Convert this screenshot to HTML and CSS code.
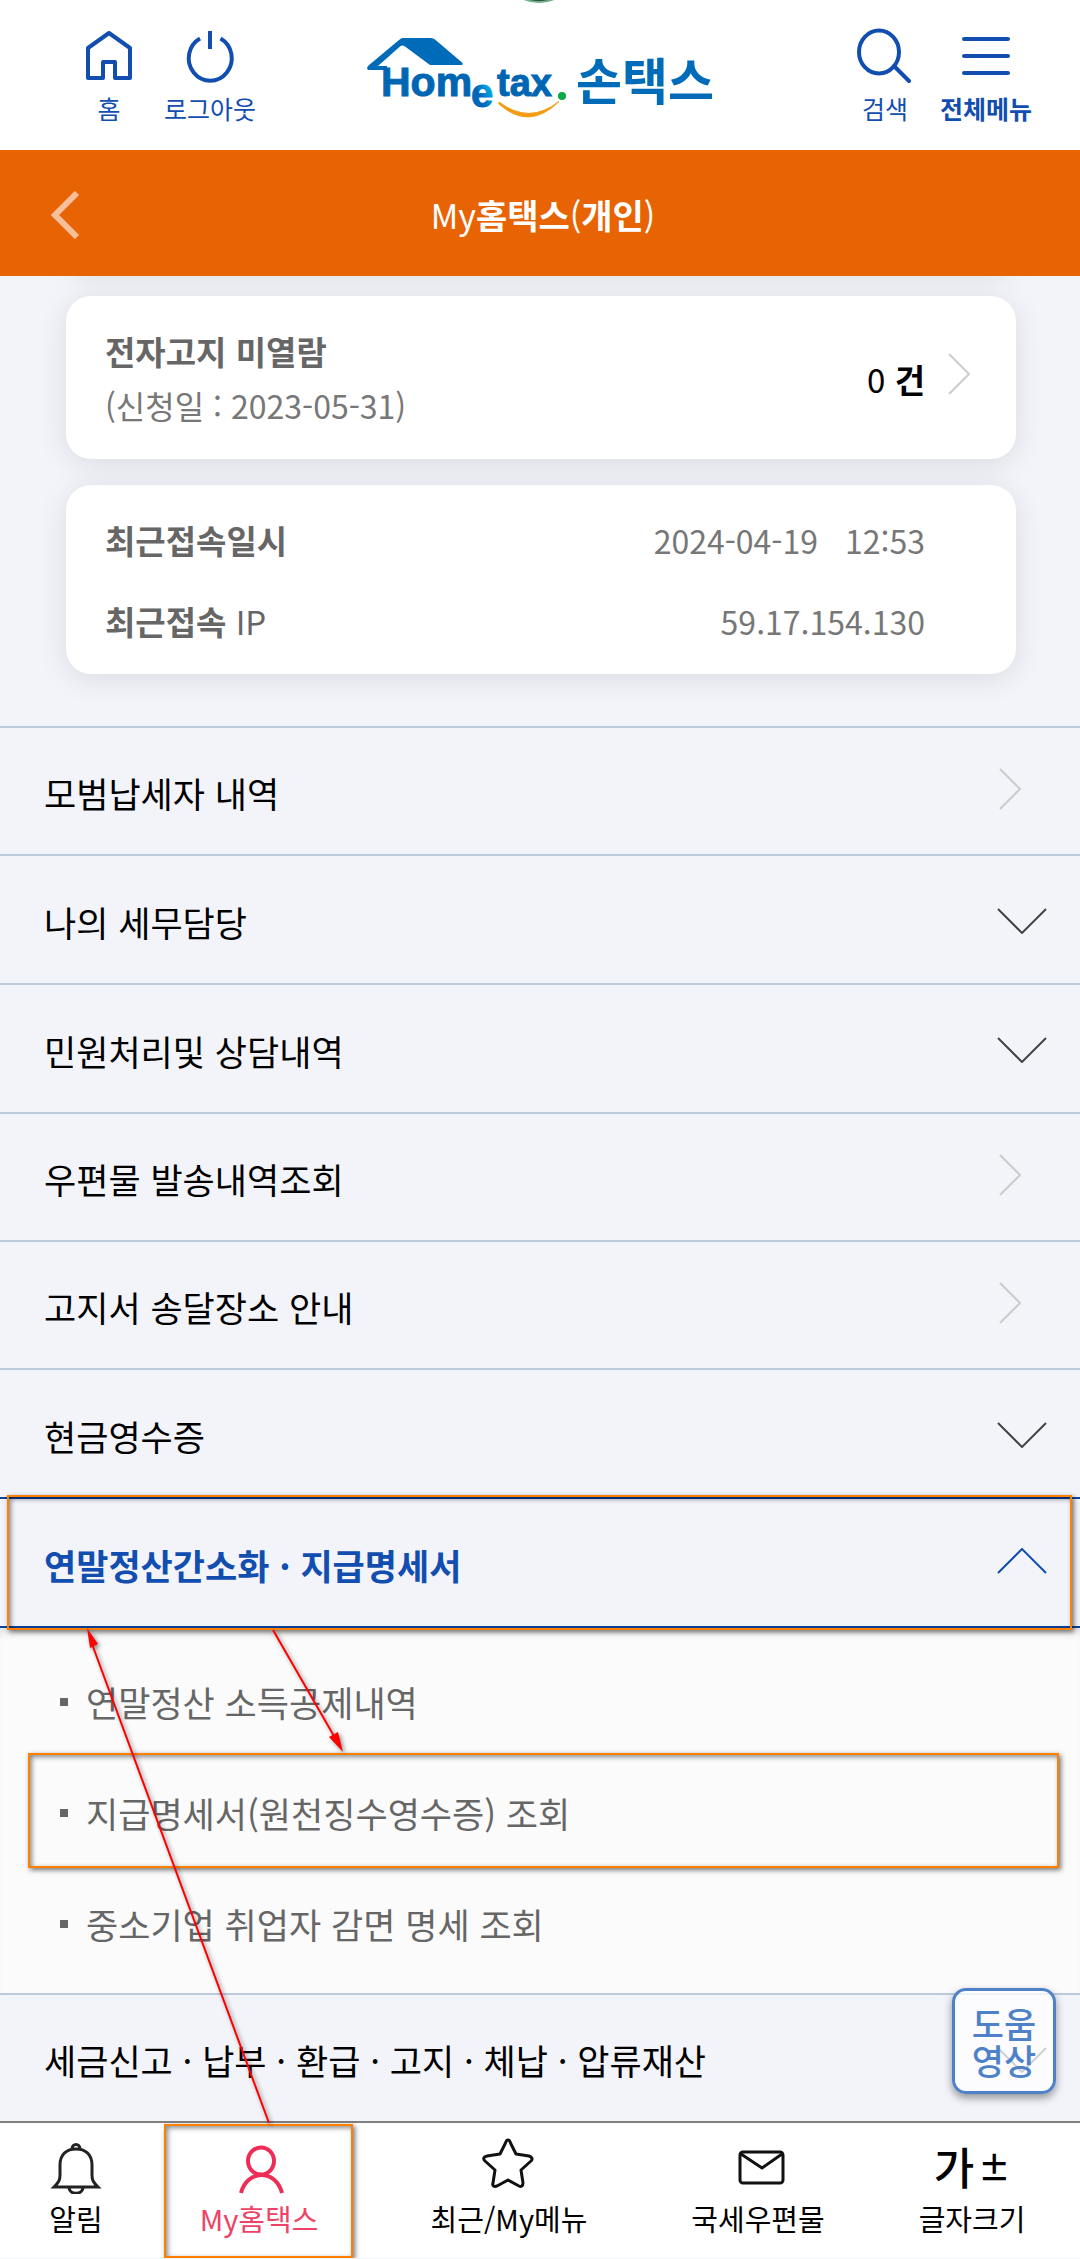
FILE: index.html
```html
<!DOCTYPE html>
<html lang="ko">
<head>
<meta charset="utf-8">
<meta name="viewport" content="width=device-width, initial-scale=1">
<title>My홈택스(개인)</title>
<link rel="stylesheet" href="styles.css">
</head>
<body>
<div class="app">
  <header class="topbar">
    <span class="camera" aria-hidden="true"></span>
    <div class="tools tools-start">
      <a class="tool" href="#home">
        <svg width="56" height="56" viewBox="0 0 56 56" fill="none" stroke="#114eb0" stroke-width="4" stroke-linejoin="round"><path d="M7 21 28 6 49 21V51H34V35H22V51H7Z"/></svg>
        <span>홈</span>
      </a>
      <button class="tool tool-wide" type="button">
        <svg width="56" height="56" viewBox="0 0 56 56" fill="none" stroke="#114eb0" stroke-width="4"><path d="M18 11.500A21.500 22.500 0 1 0 38.500 11.500M28 4V22"/></svg>
        <span>로그아웃</span>
      </button>
    </div>
    <a class="logo" href="#main">
      <svg width="206" height="90" viewBox="0 0 206 90" role="img" aria-label="Hometax">
        <defs><linearGradient id="e" x1="0" x2="1" y1="1" y2="0"><stop offset=".4" stop-color="#0066b8"/><stop offset=".8" stop-color="#00b4f0"/></linearGradient></defs>
        <path d="M2 37Q0 35 2.500 32.500L33 7Q35 5 37 5H65Q67 5 69 6.500L96 29.500Q98 32 95 32H64L39 13.500Q36.500 11.500 34 13.500L12 33H21V37Z" fill="#006bb9"/>
        <g class="logo-word" fill="#0066b3" stroke="#0066b3"><text x="15" y="63" font-size="41">Hom</text><text x="105" y="74" font-size="40" fill="url(#e)" stroke="url(#e)">e</text><text x="131" y="63" font-size="38">tax</text></g>
        <circle cx="196" cy="63" r="4" fill="#0aab45"/>
        <path d="M133 69Q163 92 193 68.500Q163 98 133 71Z" fill="#f39c12" stroke="#f39c12"/>
      </svg>
      <span class="logo-name">손택스</span>
    </a>
    <div class="tools tools-end">
      <button class="tool" type="button">
        <svg width="56" height="56" viewBox="0 0 56 56" fill="none" stroke="#114eb0" stroke-width="4" stroke-linecap="round"><ellipse cx="22" cy="25" rx="20" ry="21.500"/><path d="M37 39 52 54"/></svg>
        <span>검색</span>
      </button>
      <button class="tool tool-wide" type="button">
        <svg width="56" height="56" viewBox="0 0 56 56" fill="none" stroke="#114eb0" stroke-width="4" stroke-linecap="round"><path d="M6 12H50M6 29H50M6 46H50"/></svg>
        <strong>전체메뉴</strong>
      </button>
    </div>
  </header>

  <div class="titlebar">
    <button class="back" type="button" aria-label="뒤로"><svg width="30" height="48" viewBox="0 0 30 48" fill="none" stroke="#f8bf9b" stroke-width="6"><path d="M27 2 5 24 27 46"/></svg></button>
    <h1>My<b>홈택스</b>(<b>개인</b>)</h1>
  </div>

  <main>
    <section class="cards">
      <a class="card notice" href="#notice">
        <span class="notice-text"><b>전자고지 미열람</b><span class="value">(신청일 : 2023-05-31)</span></span>
        <span class="count">0 <b>건</b></span>
        <svg class="go" width="24" height="42" viewBox="0 0 24 42"><path d="M1 1 21 21 1 41"/></svg>
      </a>
      <dl class="card access">
        <div><dt>최근접속일시</dt><dd class="value">2024-04-19<time>12:53</time></dd></div>
        <div><dt>최근접속 <span>IP</span></dt><dd class="value">59.17.154.130</dd></div>
      </dl>
    </section>

    <ul class="menu">
      <li><a class="row" href="#m1">모범납세자 내역<svg class="go" width="24" height="42" viewBox="0 0 24 42"><path d="M1 1 21 21 1 41"/></svg></a></li>
      <li><button class="row toggle" type="button">나의 세무담당<svg class="fold" width="50" height="26" viewBox="0 0 50 26"><path d="M1 1 25 25 49 1"/></svg></button></li>
      <li><button class="row toggle" type="button">민원처리및 상담내역<svg class="fold" width="50" height="26" viewBox="0 0 50 26"><path d="M1 1 25 25 49 1"/></svg></button></li>
      <li><a class="row" href="#m4">우편물 발송내역조회<svg class="go" width="24" height="42" viewBox="0 0 24 42"><path d="M1 1 21 21 1 41"/></svg></a></li>
      <li><a class="row" href="#m5">고지서 송달장소 안내<svg class="go" width="24" height="42" viewBox="0 0 24 42"><path d="M1 1 21 21 1 41"/></svg></a></li>
      <li><button class="row toggle" type="button">현금영수증<svg class="fold" width="50" height="26" viewBox="0 0 50 26"><path d="M1 1 25 25 49 1"/></svg></button></li>
      <li class="open">
        <button class="row toggle marked" type="button" aria-expanded="true">연말정산간소화 · 지급명세서<svg class="fold" width="50" height="26" viewBox="0 0 50 26"><path d="M1 25 25 1 49 25"/></svg></button>
        <ul class="submenu">
          <li><a href="#s1">연말정산 소득공제내역</a></li>
          <li><a class="marked" href="#s2">지급명세서(원천징수영수증) 조회</a></li>
          <li><a href="#s3">중소기업 취업자 감면 명세 조회</a></li>
        </ul>
        <svg class="arrows" width="360" height="630" viewBox="0 0 360 630" aria-hidden="true">
          <g stroke="#f00" stroke-width="2"><path d="M273 131 338 244M269 624 92 145"/></g>
          <g fill="#f00"><path d="M343 253 329 238 338 233ZM87 129 98 145 90 149Z"/></g>
        </svg>
      </li>
      <li class="last">
        <button class="row" type="button">세금신고 · 납부 · 환급 · 고지 · 체납 · 압류재산<svg class="fold" width="50" height="26" viewBox="0 0 50 26"><path d="M1 1 25 25 49 1"/></svg></button>
        <button class="help" type="button"><span>도움</span><span>영상</span></button>
      </li>
    </ul>
  </main>

  <nav class="tabs">
    <a class="tab" href="#alarm">
      <svg width="56" height="56" viewBox="0 0 56 56" fill="none" stroke="#222" stroke-width="3"><path d="M6 49C11 44 12 42 12 37V27C12 16 19 11 28 11S44 16 44 27V37C44 42 45 44 50 49ZM24 11C24 5 32 5 32 11M21 50C22 57 34 57 35 50"/></svg>
      <span>알림</span>
    </a>
    <a class="tab current marked" href="#my">
      <svg width="56" height="56" viewBox="0 0 56 56" fill="none" stroke="#ee2d56" stroke-width="4"><ellipse cx="30" cy="23" rx="13" ry="13.500"/><path d="M10 55C16 31 45 31 51 55"/></svg>
      <span>My홈택스</span>
    </a>
    <a class="tab" href="#recent">
      <svg width="56" height="56" viewBox="0 0 56 56" fill="none" stroke="#111" stroke-width="3" stroke-linejoin="round"><path d="M27 2C29 2 29 4 30 6L35 16L48 18C51 19 52 21 50 23L40 32L42 45C42 48 40 49 38 48L27 42L16 48C13 49 11 48 12 45L14 32L4 23C2 21 2 19 6 18L19 16L24 6C25 4 25 2 27 2Z"/></svg>
      <span>최근/My메뉴</span>
    </a>
    <a class="tab" href="#mail">
      <svg width="56" height="56" viewBox="0 0 56 56" fill="none" stroke="#111" stroke-width="3"><rect x="10" y="14" width="43" height="31" rx="3"/><path d="M11 16 32 30 52 16"/></svg>
      <span>국세우편물</span>
    </a>
    <button class="tab" type="button">
      <span class="glyph"><span>가</span><span class="pm">±</span></span>
      <span>글자크기</span>
    </button>
  </nav>
</div>
</body>
</html>
```
FILE: styles.css
```css
* { box-sizing: border-box; }
body {
  margin: 0;
  background: #f3f4fa;
  color: #000;
  font-family: "Noto Sans CJK KR", "Noto Sans", sans-serif;
}
a { color: inherit; text-decoration: none; }
button { margin: 0; padding: 0; border: 0; background: none; color: inherit; font: inherit; cursor: pointer; }
ul, dl, dd, h1 { margin: 0; padding: 0; list-style: none; }
svg { display: block; flex: none; }

.app { position: relative; overflow: hidden; }

/* Header */
.topbar {
  position: relative;
  display: grid;
  grid-template-columns: 1fr auto 1fr;
  height: 150px;
  padding: 27px 46px 0;
  background: #fff;
}
.camera {
  position: absolute;
  left: 50%;
  top: -75px;
  width: 78px;
  height: 78px;
  margin-left: -40px;
  border: 2px solid #6fae88;
  border-radius: 50%;
  background: #2f4b3b;
}
.tools { display: flex; gap: 22px; }
.tools-start { padding-left: 32px; }
.tools-end { justify-content: flex-end; }
.tool {
  display: flex;
  flex-direction: column;
  align-items: center;
  width: 62px;
  height: 104px;
  color: #114eb0;
  font-size: 25px;
  line-height: 50px;
  white-space: nowrap;
}
.tool-wide { width: 96px; }
.logo { display: flex; align-items: center; height: 90px; margin-top: 6px; gap: 4px; }
.logo-word { font-family: "Liberation Sans", sans-serif; font-weight: 700; }
.logo-name { color: #006bb9; font-size: 50px; line-height: 90px; font-weight: 700; }

.titlebar {
  display: grid;
  grid-template-columns: 80px 1fr 80px;
  align-items: center;
  height: 126px;
  padding-top: 3px;
  background: #e86304;
  color: #fff;
}
.back { display: flex; justify-content: flex-end; }
h1 { padding-left: 6px; font-size: 34px; line-height: 48px; font-weight: 400; text-align: center; }

/* Summary cards */
.cards { position: relative; display: grid; gap: 26px; padding: 20px 64px 52px 66px; overflow: hidden; }
.cards::before {
  content: "";
  position: absolute;
  inset: -100px 64px auto 66px;
  height: 94px;
  border-radius: 25px;
  box-shadow: 0 5px 30px rgba(0, 0, 0, .1);
}
.card {
  position: relative;
  border-radius: 25px;
  background: #fff;
  color: #666;
  font-size: 33px;
  box-shadow: 0 5px 30px rgba(0, 0, 0, .1);
}
.value { color: #777; font-size: 32px; }
.notice { display: flex; align-items: center; height: 163px; padding: 0 44px 0 39px; }
.notice-text { display: grid; flex: 1; line-height: 54px; }
.count { margin: 2px 23px 0 0; color: #000; }
.go { margin-bottom: 8px; }
.go path { fill: none; stroke: #ccc; stroke-width: 2; }
.access { padding: 15px 91px 12px 39px; }
.access div { display: flex; justify-content: space-between; line-height: 81px; }
.access dt { font-weight: 700; }
.access dt span { font-weight: 400; }
time { margin-left: 27px; }

/* Accordion menu */
.menu { border-top: 2px solid #bccade; }
.row {
  position: relative;
  display: flex;
  align-items: center;
  justify-content: space-between;
  width: 100%;
  height: 128px;
  padding: 3px 57px 0 44px;
  border-bottom: 2px solid #bccade;
  font-size: 35px;
  text-align: left;
}
.toggle { height: 129px; padding-right: 33px; }
.fold path { fill: none; stroke: #444; stroke-width: 2; }
.open { position: relative; }
.open .row { border-bottom-color: #0b439d; color: #114eb0; font-weight: 700; box-shadow: 0 -2px #0b439d; }
.open .fold { margin-bottom: 6px; }
.open .fold path { stroke: #114eb0; }
.submenu {
  padding: 18px 21px 14px 28px;
  border-bottom: 2px solid #bccade;
  background: #fbfbfb;
  box-shadow: inset 0 10px 12px -8px rgba(0, 0, 0, .15);
}
.submenu a {
  position: relative;
  display: flex;
  align-items: center;
  gap: 18px;
  height: 111px;
  padding-left: 32px;
  color: #666;
  font-size: 35px;
}
.submenu a::before { content: ""; width: 8px; height: 8px; background: #666; }
.marked { position: relative; }
.marked::after {
  content: "";
  position: absolute;
  inset: -4px 0 0;
  border: 2px solid #ff8000;
  box-shadow: 2px 2px 5px rgba(0, 0, 0, .55), inset 2px 2px 5px rgba(0, 0, 0, .45);
}
.row.marked::after { inset: -4px 8px -4px 7px; }
.arrows { position: absolute; left: 0; top: 0; z-index: 1; pointer-events: none; filter: drop-shadow(2px 2px 2px rgba(0, 0, 0, .45)); }
.last { position: relative; }
.last .row { padding-right: 33px; border-bottom-color: #808080; }
.help {
  position: absolute;
  right: 24px;
  top: -7px;
  display: flex;
  flex-direction: column;
  align-items: center;
  justify-content: center;
  width: 104px;
  height: 106px;
  border: 3px solid #4f81c9;
  border-radius: 14px;
  background: rgba(255, 255, 255, .75);
  color: #4f81c9;
  font-size: 35px;
  line-height: 37px;
  font-weight: 500;
  box-shadow: 0 4px 8px rgba(0, 0, 0, .4);
}

/* Bottom tabs */
.tabs { display: grid; grid-template-columns: 152fr 214fr 286fr 212fr 216fr; background: #fff; }
.tab {
  display: flex;
  flex-direction: column;
  align-items: center;
  height: 135px;
  padding-top: 15px;
  font-size: 29px;
  line-height: 48px;
  white-space: nowrap;
}
.tab svg, .glyph { height: 56px; }
.current { color: #ee4266; }
.tab.marked::after { inset: 1px 13px 0 12px; }
.glyph { display: flex; align-items: center; gap: 4px; font-size: 44px; font-weight: 500; }
.pm { font-size: 32px; font-weight: 700; }
```
